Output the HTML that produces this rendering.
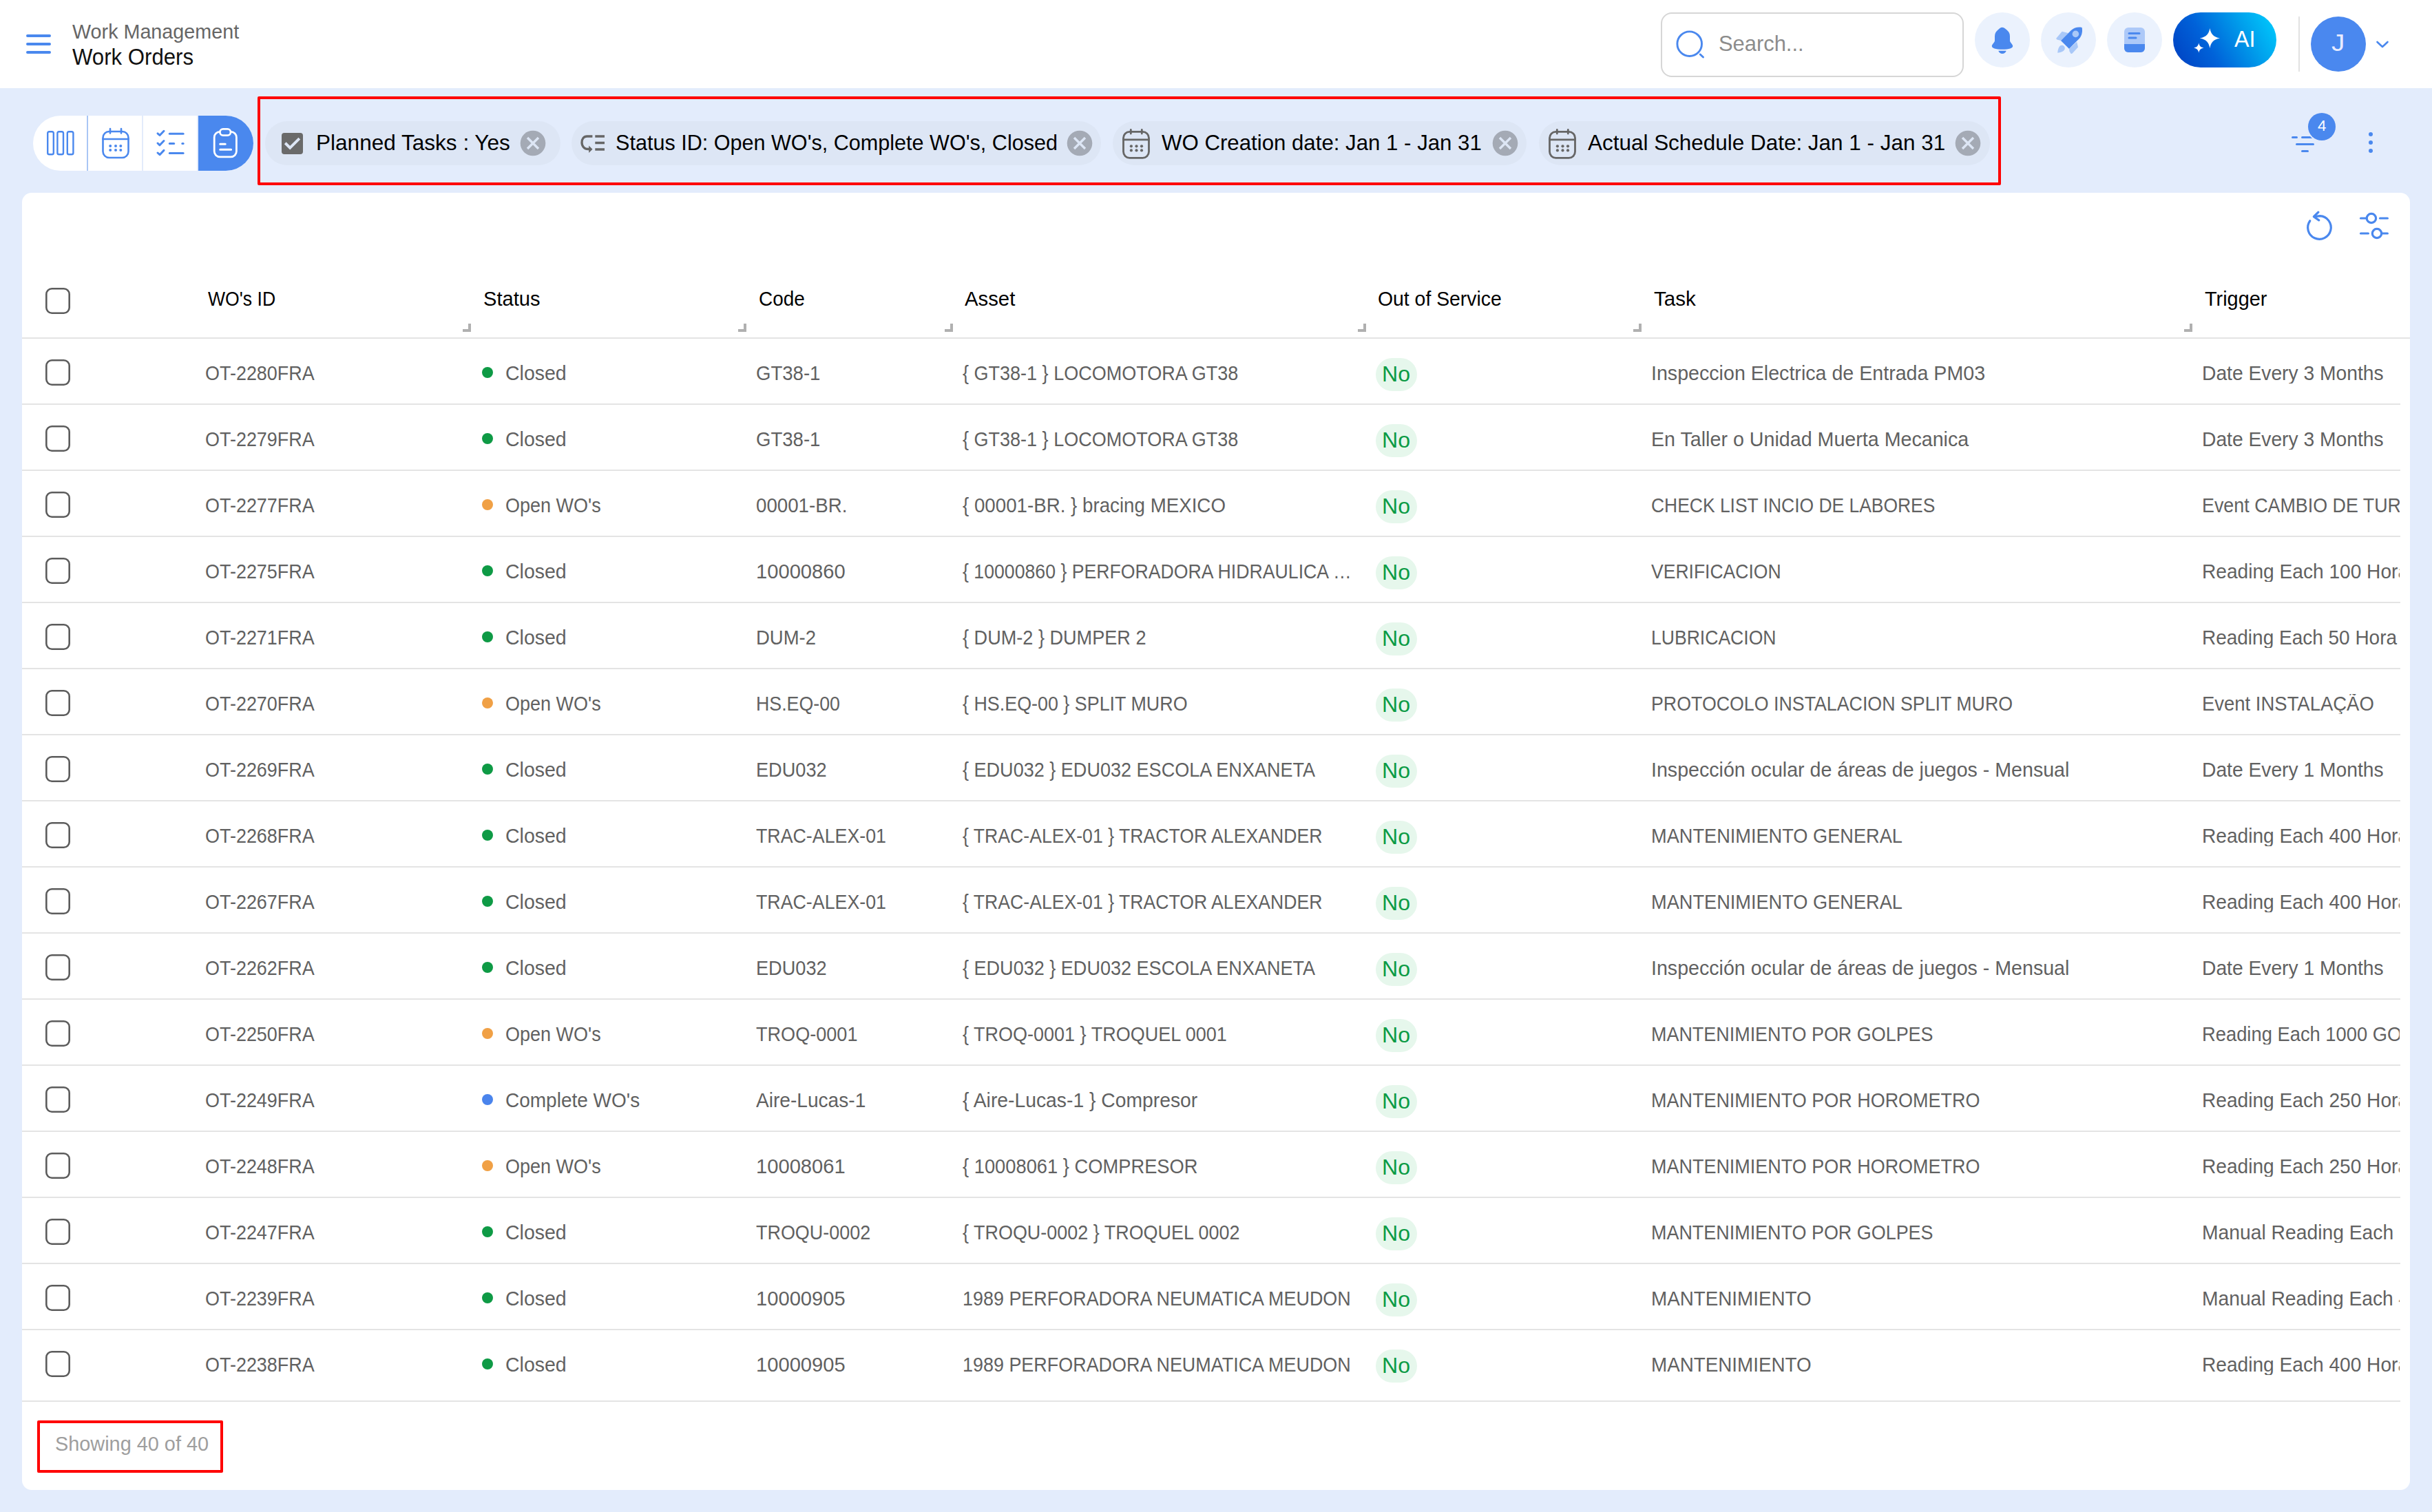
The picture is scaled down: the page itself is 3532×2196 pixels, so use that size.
<!DOCTYPE html>
<html><head><meta charset="utf-8"><title>Work Orders</title>
<style>
html,body{margin:0;padding:0}
body{width:3532px;height:2196px;position:relative;overflow:hidden;background:#e3ecfc;font-family:"Liberation Sans", sans-serif}
</style></head><body>
<div style="position:absolute;left:0;top:0;width:3532px;height:128px;background:#fff"></div>
<div style="position:absolute;left:38px;top:49.9px;width:36px;height:4.6px;border-radius:2.3px;background:#4a88ee"></div>
<div style="position:absolute;left:38px;top:61.9px;width:36px;height:4.6px;border-radius:2.3px;background:#4a88ee"></div>
<div style="position:absolute;left:38px;top:73.9px;width:36px;height:4.6px;border-radius:2.3px;background:#4a88ee"></div>
<div style="position:absolute;left:105px;top:31.5px;white-space:pre;font-size:29px;line-height:29px;color:#666666;font-weight:400"><span style="display:inline-block;transform:scaleX(0.9904);transform-origin:0 0;white-space:pre">Work Management</span></div>
<div style="position:absolute;left:105px;top:66.1px;white-space:pre;font-size:33px;line-height:33px;color:#111111;font-weight:400"><span style="display:inline-block;transform:scaleX(0.9446);transform-origin:0 0;white-space:pre">Work Orders</span></div>
<div style="position:absolute;left:2412px;top:18px;width:436px;height:90px;border:2px solid #d6d6d6;border-radius:16px;background:#fff"></div>
<svg style="position:absolute;left:2430px;top:40px" width="48" height="48" viewBox="0 0 48 48"><circle cx="23.7" cy="23.7" r="17.8" fill="none" stroke="#4a88ee" stroke-width="2.9"/><path d="M39.200 39 L43.500 43" stroke="#4a88ee" stroke-width="2.9" stroke-linecap="round"/></svg>
<div style="position:absolute;left:2496px;top:46.9px;white-space:pre;font-size:32px;line-height:32px;color:#8c8c8c;font-weight:400"><span style="display:inline-block;transform:scaleX(0.9652);transform-origin:0 0;white-space:pre">Search...</span></div>
<div style="position:absolute;left:2868px;top:18px;width:80px;height:80px;border-radius:40px;background:#ebf2fd"></div>
<div style="position:absolute;left:2964px;top:18px;width:80px;height:80px;border-radius:40px;background:#ebf2fd"></div>
<div style="position:absolute;left:3060px;top:18px;width:80px;height:80px;border-radius:40px;background:#ebf2fd"></div>
<svg style="position:absolute;left:2888px;top:38px" width="40" height="42" viewBox="0 0 40 42"><path d="M19.7 1.8C17.5 1.8 16 3.5 13.5 5.5C10.5 8 9 10.5 9 15V21C9 23.5 4.8 26.5 4.8 29C4.8 32 10 33.8 20 33.8S35.2 32 35.2 29C35.2 26.5 31 23.5 31 21V15C31 10.5 29.5 8 26.5 5.5C24 3.5 22 1.8 19.7 1.8Z" fill="#4a88ee"/><path d="M14.3 35.8H25.7C25 38.3 22.7 40 20 40S15 38.3 14.3 35.8Z" fill="#4a88ee"/></svg>
<svg style="position:absolute;left:2984px;top:38px" width="44" height="44" viewBox="0 0 44 44"><path d="M10.7 7.8 L19.7 9.9 L9 20.9 L4.2 19.7 C2.6 19.3 1.8 18.3 2.6 17.3 Z" fill="#a9c8f8"/><path d="M32.2 22.7 L34 30.4 L25.7 39.4 C24.8 40.3 23.9 40.3 23.3 39.5 L21.5 36.4 L20.9 32.8 Z" fill="#a9c8f8"/><path d="M4.2 38.8 C4.5 34.5 5.8 30.5 7.6 28.8 C9.4 27.1 12 27.4 13.6 29 C15.2 30.6 15.3 33.3 13.5 35.2 C11.8 37 8.6 38.4 4.2 38.8Z" fill="#a9c8f8"/><path d="M9 20.9 L23.9 6 C28.5 1.8 34 0.9 39.6 1.9 C40.7 7.3 39.7 13.4 35.8 17.9 L20.9 32.8 Z" fill="#4a88ee"/><circle cx="30.4" cy="11.4" r="4.8" fill="#a9c8f8"/></svg>
<svg style="position:absolute;left:3084px;top:39px" width="32" height="38" viewBox="0 0 32 38"><rect x="1" y="1" width="30" height="36" rx="6" fill="#adc9f8"/><path d="M1 25 H31 V31 a6 6 0 0 1 -6 6 H7 a6 6 0 0 1 -6 -6 Z" fill="#4a88ee"/><path d="M8 9.5 H23 M8 16 H18" stroke="#4a88ee" stroke-width="3" stroke-linecap="round"/></svg>
<div style="position:absolute;left:3156px;top:18px;width:150px;height:80px;border-radius:40px;background:linear-gradient(60deg,#003fc0 0%,#0062d9 35%,#00a0ec 70%,#00d0ff 100%)"></div>
<svg style="position:absolute;left:3180px;top:36px" width="50" height="46" viewBox="0 0 50 46"><path d="M29.4 5 C30.700 13 34.200 17.600 44 19.500 C34.200 21.400 30.700 26 29.400 34 C28.100 26 24.600 21.400 14.800 19.500 C24.600 17.600 28.100 13 29.400 5Z" fill="#fff"/><path d="M13.300 26.200 C14 30.300 15.700 32.500 20.500 33.500 C15.700 34.500 14 36.700 13.300 40.800 C12.600 36.700 10.900 34.500 6.100 33.500 C10.900 32.500 12.600 30.300 13.300 26.200Z" fill="#fff"/></svg>
<div style="position:absolute;left:3245px;top:40.1px;white-space:pre;font-size:33px;line-height:33px;color:#ffffff;font-weight:400"><span style="display:inline-block;transform:scaleX(0.9783);transform-origin:0 0;white-space:pre">AI</span></div>
<div style="position:absolute;left:3338px;top:24px;width:2px;height:80px;background:#e2e2e2"></div>
<div style="position:absolute;left:3356px;top:24px;width:80px;height:80px;border-radius:40px;background:#4a88ef"></div>
<div style="position:absolute;left:3386px;top:44.4px;white-space:pre;font-size:35px;line-height:35px;color:#e8ebff;font-weight:400"><span style="display:inline-block;transform:scaleX(1.1035);transform-origin:0 0;white-space:pre">J</span></div>
<svg style="position:absolute;left:3448px;top:56px" width="24" height="18" viewBox="0 0 24 18"><path d="M4.5 5 L12 12 L19.5 5" fill="none" stroke="#4a88ee" stroke-width="2.6" stroke-linecap="round" stroke-linejoin="round"/></svg>
<div style="position:absolute;left:48px;top:168px;width:320px;height:80px;border-radius:40px;background:#fff;overflow:hidden"><div style="position:absolute;left:78px;top:0;width:2px;height:80px;background:#a9c6f5"></div><div style="position:absolute;left:158px;top:0;width:2px;height:80px;background:#e3ebfb"></div><div style="position:absolute;left:238px;top:0;width:2px;height:80px;background:#e3ebfb"></div><div style="position:absolute;left:240px;top:0;width:80px;height:80px;background:#4a88ee"></div></div>
<svg style="position:absolute;left:64px;top:186px" width="48" height="44" viewBox="0 0 48 44"><rect x="5.200" y="5.200" width="8.600" height="33" rx="2.300" fill="none" stroke="#4a88ee" stroke-width="2.4"/><rect x="19.400" y="5.200" width="8.600" height="33" rx="2.300" fill="none" stroke="#4a88ee" stroke-width="2.4"/><rect x="33.800" y="5.200" width="8.600" height="33" rx="2.300" fill="none" stroke="#4a88ee" stroke-width="2.4"/></svg>
<svg style="position:absolute;left:144px;top:184px" width="48" height="50" viewBox="0 0 48 50"><rect x="5.500" y="7" width="37" height="38" rx="9" fill="none" stroke="#4a88ee" stroke-width="2.6"/><path d="M5.5 18 H42.5 M16 3 V9.500 M32 3 V9.500" stroke="#4a88ee" stroke-width="2.600" stroke-linecap="round"/><g fill="#4a88ee"><circle cx="16.200" cy="28" r="2"/><circle cx="24" cy="28" r="2"/><circle cx="31.300" cy="28" r="2"/><circle cx="16.200" cy="34" r="2"/><circle cx="24" cy="34" r="2"/><circle cx="31.300" cy="34" r="2"/></g></svg>
<svg style="position:absolute;left:224px;top:186px" width="48" height="44" viewBox="0 0 48 44"><g fill="none" stroke="#4a88ee" stroke-width="3" stroke-linecap="round" stroke-linejoin="round"><path d="M5 7.800 L8 10.500 L14 4.300"/><path d="M5 22 L8 24.800 L14 18.500"/><path d="M5 36 L8 38.700 L14 32.400"/><path d="M22.300 8.300 H42.100"/><path d="M22.300 22.600 H28.700"/><path d="M40.800 22.600 H42.100"/><path d="M22.300 36.500 H42.100"/></g></svg>
<svg style="position:absolute;left:304px;top:182px" width="48" height="52" viewBox="0 0 48 52"><rect x="7.200" y="9.400" width="32.200" height="36.400" rx="8" fill="none" stroke="#fff" stroke-width="2.8"/><rect x="15.400" y="5.300" width="15.600" height="9.300" rx="4.600" fill="#4a88ee" stroke="#fff" stroke-width="2.800"/><path d="M15.700 27.200 H23.200 M15.700 35.300 H31.600" stroke="#fff" stroke-width="3" stroke-linecap="round"/></svg>
<div style="position:absolute;left:374px;top:140px;width:2524px;height:121px;border:4px solid #ff0000;border-radius:2px"></div>
<div style="position:absolute;left:385px;top:176px;width:429px;height:64px;border-radius:32px;background:#dde6f5"></div>
<div style="position:absolute;left:830px;top:176px;width:769px;height:64px;border-radius:32px;background:#dde6f5"></div>
<div style="position:absolute;left:1616px;top:176px;width:601px;height:64px;border-radius:32px;background:#dde6f5"></div>
<div style="position:absolute;left:2235px;top:176px;width:655px;height:64px;border-radius:32px;background:#dde6f5"></div>
<svg style="position:absolute;left:409px;top:193px" width="31" height="31" viewBox="0 0 31 31"><rect x="0" y="0" width="31" height="31" rx="4" fill="#6a6a6a"/><path d="M5.200 14.800 L12.200 21.600 L25.800 8.200" fill="none" stroke="#dde6f5" stroke-width="4"/></svg>
<div style="position:absolute;left:459px;top:190.9px;white-space:pre;font-size:32px;line-height:32px;color:#000000;font-weight:400"><span style="display:inline-block;transform:scaleX(0.9860);transform-origin:0 0;white-space:pre">Planned Tasks : Yes</span></div>
<svg style="position:absolute;left:840px;top:192px" width="40" height="36" viewBox="0 0 40 36"><path d="M20.400 6 H12.500 C7.800 6 5 9.800 5 15 C5 20.500 8.800 24.500 14 24.500 H16" fill="none" stroke="#666" stroke-width="3.300"/><path d="M15.200 19.500 L20.500 24.700 L15.200 30 Z" fill="#666"/><path d="M24.300 6 H38 M24.300 15.500 H38 M24.300 25 H38" stroke="#666" stroke-width="3.300"/></svg>
<div style="position:absolute;left:894px;top:190.9px;white-space:pre;font-size:32px;line-height:32px;color:#000000;font-weight:400"><span style="display:inline-block;transform:scaleX(0.9554);transform-origin:0 0;white-space:pre">Status ID: Open WO&#x27;s, Complete WO&#x27;s, Closed</span></div>
<svg style="position:absolute;left:1626px;top:183.5px" width="48" height="50" viewBox="0 0 48 50"><rect x="5.500" y="7.300" width="37" height="38" rx="9" fill="none" stroke="#666" stroke-width="2.8"/><path d="M5.5 18.800 H42.5 M16.300 4.500 V10 M32.300 4.500 V10" stroke="#666" stroke-width="2.8" stroke-linecap="round"/><g fill="#666"><circle cx="16.900" cy="28.300" r="2.100"/><circle cx="24.500" cy="28.300" r="2.100"/><circle cx="32" cy="28.300" r="2.100"/><circle cx="16.900" cy="34.400" r="2.100"/><circle cx="24.500" cy="34.400" r="2.100"/><circle cx="32" cy="34.400" r="2.100"/></g></svg>
<div style="position:absolute;left:1687px;top:190.9px;white-space:pre;font-size:32px;line-height:32px;color:#000000;font-weight:400"><span style="display:inline-block;transform:scaleX(0.9751);transform-origin:0 0;white-space:pre">WO Creation date: Jan 1 - Jan 31</span></div>
<svg style="position:absolute;left:2245px;top:183.5px" width="48" height="50" viewBox="0 0 48 50"><rect x="5.500" y="7.300" width="37" height="38" rx="9" fill="none" stroke="#666" stroke-width="2.8"/><path d="M5.5 18.800 H42.5 M16.300 4.500 V10 M32.300 4.500 V10" stroke="#666" stroke-width="2.8" stroke-linecap="round"/><g fill="#666"><circle cx="16.900" cy="28.300" r="2.100"/><circle cx="24.500" cy="28.300" r="2.100"/><circle cx="32" cy="28.300" r="2.100"/><circle cx="16.900" cy="34.400" r="2.100"/><circle cx="24.500" cy="34.400" r="2.100"/><circle cx="32" cy="34.400" r="2.100"/></g></svg>
<div style="position:absolute;left:2306px;top:190.9px;white-space:pre;font-size:32px;line-height:32px;color:#000000;font-weight:400"><span style="display:inline-block;transform:scaleX(0.9826);transform-origin:0 0;white-space:pre">Actual Schedule Date: Jan 1 - Jan 31</span></div>
<svg style="position:absolute;left:755px;top:189px" width="38" height="38" viewBox="0 0 38 38"><circle cx="19" cy="19" r="18.300" fill="#a4aab5"/><path d="M11 11 L27 27 M27 11 L11 27" stroke="#dde6f5" stroke-width="3.4"/></svg>
<svg style="position:absolute;left:1549px;top:189px" width="38" height="38" viewBox="0 0 38 38"><circle cx="19" cy="19" r="18.300" fill="#a4aab5"/><path d="M11 11 L27 27 M27 11 L11 27" stroke="#dde6f5" stroke-width="3.4"/></svg>
<svg style="position:absolute;left:2167px;top:189px" width="38" height="38" viewBox="0 0 38 38"><circle cx="19" cy="19" r="18.300" fill="#a4aab5"/><path d="M11 11 L27 27 M27 11 L11 27" stroke="#dde6f5" stroke-width="3.4"/></svg>
<svg style="position:absolute;left:2839px;top:189px" width="38" height="38" viewBox="0 0 38 38"><circle cx="19" cy="19" r="18.300" fill="#a4aab5"/><path d="M11 11 L27 27 M27 11 L11 27" stroke="#dde6f5" stroke-width="3.4"/></svg>
<svg style="position:absolute;left:3320px;top:160px" width="80" height="70" viewBox="0 0 80 70"><g stroke="#4a88ee" stroke-width="3" stroke-linecap="round"><path d="M9.500 39.400 H15.500"/><path d="M23.500 39.400 H42"/><path d="M15.500 49.400 H39.500"/><path d="M23.500 59.400 H31.500"/></g><circle cx="52" cy="24" r="22" fill="#e3ebfb"/><circle cx="52" cy="24" r="20" fill="#4a88ee"/></svg>
<div style="position:absolute;left:3366px;top:171.9px;white-space:pre;font-size:22px;line-height:22px;color:#ffffff;font-weight:400"><span style="display:inline-block;transform:scaleX(1.0105);transform-origin:0 0;white-space:pre">4</span></div>
<div style="position:absolute;left:3440px;top:192px;width:6px;height:6px;border-radius:3px;background:#4a88ee"></div>
<div style="position:absolute;left:3440px;top:204px;width:6px;height:6px;border-radius:3px;background:#4a88ee"></div>
<div style="position:absolute;left:3440px;top:216px;width:6px;height:6px;border-radius:3px;background:#4a88ee"></div>
<div style="position:absolute;left:32px;top:280px;width:3468px;height:1884px;border-radius:14px;background:#fff"></div>
<svg style="position:absolute;left:3344.7px;top:302px" width="48" height="52" viewBox="0 0 48 52"><path d="M9.800 18.700 A16.800 16.800 0 1 0 24.200 11.700 L16.500 12.600" fill="none" stroke="#4a88ee" stroke-width="3.200" stroke-linecap="round"/><path d="M21.900 6.100 L15.300 12.700 L22.800 17.900" fill="none" stroke="#4a88ee" stroke-width="3.200" stroke-linecap="round" stroke-linejoin="round"/></svg>
<svg style="position:absolute;left:3420px;top:304px" width="56" height="48" viewBox="0 0 56 48"><g fill="none" stroke="#4a88ee" stroke-width="3.200" stroke-linecap="round"><path d="M8.500 13 H17"/><path d="M36.500 13 H47.400"/><circle cx="23.900" cy="13" r="6.700"/><path d="M8.500 35 H19.400"/><path d="M39 35 H47.400"/><circle cx="32" cy="35" r="6.700"/></g></svg>
<svg style="position:absolute;left:66px;top:418px" width="36" height="38" viewBox="0 0 36 38"><rect x="1.3" y="1.3" width="33.4" height="35.4" rx="8" fill="none" stroke="#5c5c5c" stroke-width="2.6"/></svg>
<div style="position:absolute;left:302px;top:419.5px;white-space:pre;font-size:29px;line-height:29px;color:#000000;font-weight:400"><span style="display:inline-block;transform:scaleX(0.9171);transform-origin:0 0;white-space:pre">WO&#x27;s ID</span></div>
<div style="position:absolute;left:702px;top:419.5px;white-space:pre;font-size:29px;line-height:29px;color:#000000;font-weight:400"><span style="display:inline-block;transform:scaleX(1.0031);transform-origin:0 0;white-space:pre">Status</span></div>
<div style="position:absolute;left:1102px;top:419.5px;white-space:pre;font-size:29px;line-height:29px;color:#000000;font-weight:400"><span style="display:inline-block;transform:scaleX(0.9632);transform-origin:0 0;white-space:pre">Code</span></div>
<div style="position:absolute;left:1401px;top:419.5px;white-space:pre;font-size:29px;line-height:29px;color:#000000;font-weight:400"><span style="display:inline-block;transform:scaleX(1.0108);transform-origin:0 0;white-space:pre">Asset</span></div>
<div style="position:absolute;left:2001px;top:419.5px;white-space:pre;font-size:29px;line-height:29px;color:#000000;font-weight:400"><span style="display:inline-block;transform:scaleX(0.9784);transform-origin:0 0;white-space:pre">Out of Service</span></div>
<div style="position:absolute;left:2402px;top:419.5px;white-space:pre;font-size:29px;line-height:29px;color:#000000;font-weight:400"><span style="display:inline-block;transform:scaleX(1.0198);transform-origin:0 0;white-space:pre">Task</span></div>
<div style="position:absolute;left:3202px;top:419.5px;white-space:pre;font-size:29px;line-height:29px;color:#000000;font-weight:400"><span style="display:inline-block;transform:scaleX(0.9957);transform-origin:0 0;white-space:pre">Trigger</span></div>
<div style="position:absolute;left:672px;top:470px;width:8px;height:8px;border-right:4px solid #b0b0b0;border-bottom:4px solid #b0b0b0"></div>
<div style="position:absolute;left:1072px;top:470px;width:8px;height:8px;border-right:4px solid #b0b0b0;border-bottom:4px solid #b0b0b0"></div>
<div style="position:absolute;left:1372px;top:470px;width:8px;height:8px;border-right:4px solid #b0b0b0;border-bottom:4px solid #b0b0b0"></div>
<div style="position:absolute;left:1972px;top:470px;width:8px;height:8px;border-right:4px solid #b0b0b0;border-bottom:4px solid #b0b0b0"></div>
<div style="position:absolute;left:2372px;top:470px;width:8px;height:8px;border-right:4px solid #b0b0b0;border-bottom:4px solid #b0b0b0"></div>
<div style="position:absolute;left:3172px;top:470px;width:8px;height:8px;border-right:4px solid #b0b0b0;border-bottom:4px solid #b0b0b0"></div>
<div style="position:absolute;left:32px;top:490px;width:3468px;height:2px;background:#e4e4e4"></div>
<svg style="position:absolute;left:66px;top:522px" width="36" height="38" viewBox="0 0 36 38"><rect x="1.3" y="1.3" width="33.4" height="35.4" rx="8" fill="none" stroke="#5c5c5c" stroke-width="2.6"/></svg>
<div style="position:absolute;left:298px;top:527.5px;white-space:pre;font-size:29px;line-height:29px;color:#616161;font-weight:400"><span style="display:inline-block;transform:scaleX(0.9291);transform-origin:0 0;white-space:pre">OT-2280FRA</span></div>
<div style="position:absolute;left:700px;top:533px;width:16px;height:16px;border-radius:8px;background:#0e9a45"></div>
<div style="position:absolute;left:734px;top:527.5px;white-space:pre;font-size:29px;line-height:29px;color:#616161;font-weight:400"><span style="display:inline-block;transform:scaleX(0.9823);transform-origin:0 0;white-space:pre">Closed</span></div>
<div style="position:absolute;left:1098px;top:527.5px;white-space:pre;font-size:29px;line-height:29px;color:#616161;font-weight:400"><span style="display:inline-block;transform:scaleX(0.9505);transform-origin:0 0;white-space:pre">GT38-1</span></div>
<div style="position:absolute;left:1398px;top:527.5px;white-space:pre;font-size:29px;line-height:29px;color:#616161;font-weight:400"><span style="display:inline-block;transform:scaleX(0.9315);transform-origin:0 0;white-space:pre">{ GT38-1 } LOCOMOTORA GT38</span></div>
<div style="position:absolute;left:1998px;top:520px;width:60px;height:48px;border-radius:24px;background:#e6f7ec"></div>
<div style="position:absolute;left:2007px;top:526.9px;white-space:pre;font-size:32px;line-height:32px;color:#0c9b45;font-weight:400"><span style="display:inline-block;transform:scaleX(1.0042);transform-origin:0 0;white-space:pre">No</span></div>
<div style="position:absolute;left:2398px;top:527.5px;white-space:pre;font-size:29px;line-height:29px;color:#616161;font-weight:400"><span style="display:inline-block;transform:scaleX(0.9867);transform-origin:0 0;white-space:pre">Inspeccion Electrica de Entrada PM03</span></div>
<div style="position:absolute;left:3198px;top:527.5px;width:287px;overflow:hidden;font-size:29px;line-height:29px;color:#616161;font-weight:400"><span style="display:inline-block;transform:scaleX(0.9733);transform-origin:0 0;white-space:pre">Date Every 3 Months</span></div>
<div style="position:absolute;left:32px;top:586px;width:3454px;height:2px;background:#e4e4e4"></div>
<svg style="position:absolute;left:66px;top:618px" width="36" height="38" viewBox="0 0 36 38"><rect x="1.3" y="1.3" width="33.4" height="35.4" rx="8" fill="none" stroke="#5c5c5c" stroke-width="2.6"/></svg>
<div style="position:absolute;left:298px;top:623.5px;white-space:pre;font-size:29px;line-height:29px;color:#616161;font-weight:400"><span style="display:inline-block;transform:scaleX(0.9291);transform-origin:0 0;white-space:pre">OT-2279FRA</span></div>
<div style="position:absolute;left:700px;top:629px;width:16px;height:16px;border-radius:8px;background:#0e9a45"></div>
<div style="position:absolute;left:734px;top:623.5px;white-space:pre;font-size:29px;line-height:29px;color:#616161;font-weight:400"><span style="display:inline-block;transform:scaleX(0.9823);transform-origin:0 0;white-space:pre">Closed</span></div>
<div style="position:absolute;left:1098px;top:623.5px;white-space:pre;font-size:29px;line-height:29px;color:#616161;font-weight:400"><span style="display:inline-block;transform:scaleX(0.9505);transform-origin:0 0;white-space:pre">GT38-1</span></div>
<div style="position:absolute;left:1398px;top:623.5px;white-space:pre;font-size:29px;line-height:29px;color:#616161;font-weight:400"><span style="display:inline-block;transform:scaleX(0.9315);transform-origin:0 0;white-space:pre">{ GT38-1 } LOCOMOTORA GT38</span></div>
<div style="position:absolute;left:1998px;top:616px;width:60px;height:48px;border-radius:24px;background:#e6f7ec"></div>
<div style="position:absolute;left:2007px;top:622.9px;white-space:pre;font-size:32px;line-height:32px;color:#0c9b45;font-weight:400"><span style="display:inline-block;transform:scaleX(1.0042);transform-origin:0 0;white-space:pre">No</span></div>
<div style="position:absolute;left:2398px;top:623.5px;white-space:pre;font-size:29px;line-height:29px;color:#616161;font-weight:400"><span style="display:inline-block;transform:scaleX(0.9878);transform-origin:0 0;white-space:pre">En Taller o Unidad Muerta Mecanica</span></div>
<div style="position:absolute;left:3198px;top:623.5px;width:287px;overflow:hidden;font-size:29px;line-height:29px;color:#616161;font-weight:400"><span style="display:inline-block;transform:scaleX(0.9733);transform-origin:0 0;white-space:pre">Date Every 3 Months</span></div>
<div style="position:absolute;left:32px;top:682px;width:3454px;height:2px;background:#e4e4e4"></div>
<svg style="position:absolute;left:66px;top:714px" width="36" height="38" viewBox="0 0 36 38"><rect x="1.3" y="1.3" width="33.4" height="35.4" rx="8" fill="none" stroke="#5c5c5c" stroke-width="2.6"/></svg>
<div style="position:absolute;left:298px;top:719.5px;white-space:pre;font-size:29px;line-height:29px;color:#616161;font-weight:400"><span style="display:inline-block;transform:scaleX(0.9291);transform-origin:0 0;white-space:pre">OT-2277FRA</span></div>
<div style="position:absolute;left:700px;top:725px;width:16px;height:16px;border-radius:8px;background:#f0a045"></div>
<div style="position:absolute;left:734px;top:719.5px;white-space:pre;font-size:29px;line-height:29px;color:#616161;font-weight:400"><span style="display:inline-block;transform:scaleX(0.9307);transform-origin:0 0;white-space:pre">Open WO&#x27;s</span></div>
<div style="position:absolute;left:1098px;top:719.5px;white-space:pre;font-size:29px;line-height:29px;color:#616161;font-weight:400"><span style="display:inline-block;transform:scaleX(0.9547);transform-origin:0 0;white-space:pre">00001-BR.</span></div>
<div style="position:absolute;left:1398px;top:719.5px;white-space:pre;font-size:29px;line-height:29px;color:#616161;font-weight:400"><span style="display:inline-block;transform:scaleX(0.9554);transform-origin:0 0;white-space:pre">{ 00001-BR. } bracing MEXICO</span></div>
<div style="position:absolute;left:1998px;top:712px;width:60px;height:48px;border-radius:24px;background:#e6f7ec"></div>
<div style="position:absolute;left:2007px;top:718.9px;white-space:pre;font-size:32px;line-height:32px;color:#0c9b45;font-weight:400"><span style="display:inline-block;transform:scaleX(1.0042);transform-origin:0 0;white-space:pre">No</span></div>
<div style="position:absolute;left:2398px;top:719.5px;white-space:pre;font-size:29px;line-height:29px;color:#616161;font-weight:400"><span style="display:inline-block;transform:scaleX(0.9117);transform-origin:0 0;white-space:pre">CHECK LIST INCIO DE LABORES</span></div>
<div style="position:absolute;left:3198px;top:719.5px;width:287px;overflow:hidden;font-size:29px;line-height:29px;color:#616161;font-weight:400"><span style="display:inline-block;transform:scaleX(0.9260);transform-origin:0 0;white-space:pre">Event CAMBIO DE TURNO</span></div>
<div style="position:absolute;left:32px;top:778px;width:3454px;height:2px;background:#e4e4e4"></div>
<svg style="position:absolute;left:66px;top:810px" width="36" height="38" viewBox="0 0 36 38"><rect x="1.3" y="1.3" width="33.4" height="35.4" rx="8" fill="none" stroke="#5c5c5c" stroke-width="2.6"/></svg>
<div style="position:absolute;left:298px;top:815.5px;white-space:pre;font-size:29px;line-height:29px;color:#616161;font-weight:400"><span style="display:inline-block;transform:scaleX(0.9291);transform-origin:0 0;white-space:pre">OT-2275FRA</span></div>
<div style="position:absolute;left:700px;top:821px;width:16px;height:16px;border-radius:8px;background:#0e9a45"></div>
<div style="position:absolute;left:734px;top:815.5px;white-space:pre;font-size:29px;line-height:29px;color:#616161;font-weight:400"><span style="display:inline-block;transform:scaleX(0.9823);transform-origin:0 0;white-space:pre">Closed</span></div>
<div style="position:absolute;left:1098px;top:815.5px;white-space:pre;font-size:29px;line-height:29px;color:#616161;font-weight:400"><span style="display:inline-block;transform:scaleX(1.0050);transform-origin:0 0;white-space:pre">10000860</span></div>
<div style="position:absolute;left:1398px;top:815.5px;white-space:pre;font-size:29px;line-height:29px;color:#616161;font-weight:400"><span style="display:inline-block;transform:scaleX(0.9196);transform-origin:0 0;white-space:pre">{ 10000860 } PERFORADORA HIDRAULICA …</span></div>
<div style="position:absolute;left:1998px;top:808px;width:60px;height:48px;border-radius:24px;background:#e6f7ec"></div>
<div style="position:absolute;left:2007px;top:814.9px;white-space:pre;font-size:32px;line-height:32px;color:#0c9b45;font-weight:400"><span style="display:inline-block;transform:scaleX(1.0042);transform-origin:0 0;white-space:pre">No</span></div>
<div style="position:absolute;left:2398px;top:815.5px;white-space:pre;font-size:29px;line-height:29px;color:#616161;font-weight:400"><span style="display:inline-block;transform:scaleX(0.9145);transform-origin:0 0;white-space:pre">VERIFICACION</span></div>
<div style="position:absolute;left:3198px;top:815.5px;width:287px;overflow:hidden;font-size:29px;line-height:29px;color:#616161;font-weight:400"><span style="display:inline-block;transform:scaleX(0.9693);transform-origin:0 0;white-space:pre">Reading Each 100 Horas</span></div>
<div style="position:absolute;left:32px;top:874px;width:3454px;height:2px;background:#e4e4e4"></div>
<svg style="position:absolute;left:66px;top:906px" width="36" height="38" viewBox="0 0 36 38"><rect x="1.3" y="1.3" width="33.4" height="35.4" rx="8" fill="none" stroke="#5c5c5c" stroke-width="2.6"/></svg>
<div style="position:absolute;left:298px;top:911.5px;white-space:pre;font-size:29px;line-height:29px;color:#616161;font-weight:400"><span style="display:inline-block;transform:scaleX(0.9291);transform-origin:0 0;white-space:pre">OT-2271FRA</span></div>
<div style="position:absolute;left:700px;top:917px;width:16px;height:16px;border-radius:8px;background:#0e9a45"></div>
<div style="position:absolute;left:734px;top:911.5px;white-space:pre;font-size:29px;line-height:29px;color:#616161;font-weight:400"><span style="display:inline-block;transform:scaleX(0.9823);transform-origin:0 0;white-space:pre">Closed</span></div>
<div style="position:absolute;left:1098px;top:911.5px;white-space:pre;font-size:29px;line-height:29px;color:#616161;font-weight:400"><span style="display:inline-block;transform:scaleX(0.9473);transform-origin:0 0;white-space:pre">DUM-2</span></div>
<div style="position:absolute;left:1398px;top:911.5px;white-space:pre;font-size:29px;line-height:29px;color:#616161;font-weight:400"><span style="display:inline-block;transform:scaleX(0.9343);transform-origin:0 0;white-space:pre">{ DUM-2 } DUMPER 2</span></div>
<div style="position:absolute;left:1998px;top:904px;width:60px;height:48px;border-radius:24px;background:#e6f7ec"></div>
<div style="position:absolute;left:2007px;top:910.9px;white-space:pre;font-size:32px;line-height:32px;color:#0c9b45;font-weight:400"><span style="display:inline-block;transform:scaleX(1.0042);transform-origin:0 0;white-space:pre">No</span></div>
<div style="position:absolute;left:2398px;top:911.5px;white-space:pre;font-size:29px;line-height:29px;color:#616161;font-weight:400"><span style="display:inline-block;transform:scaleX(0.9158);transform-origin:0 0;white-space:pre">LUBRICACION</span></div>
<div style="position:absolute;left:3198px;top:911.5px;width:287px;overflow:hidden;font-size:29px;line-height:29px;color:#616161;font-weight:400"><span style="display:inline-block;transform:scaleX(0.9646);transform-origin:0 0;white-space:pre">Reading Each 50 Hora</span></div>
<div style="position:absolute;left:32px;top:970px;width:3454px;height:2px;background:#e4e4e4"></div>
<svg style="position:absolute;left:66px;top:1002px" width="36" height="38" viewBox="0 0 36 38"><rect x="1.3" y="1.3" width="33.4" height="35.4" rx="8" fill="none" stroke="#5c5c5c" stroke-width="2.6"/></svg>
<div style="position:absolute;left:298px;top:1007.5px;white-space:pre;font-size:29px;line-height:29px;color:#616161;font-weight:400"><span style="display:inline-block;transform:scaleX(0.9291);transform-origin:0 0;white-space:pre">OT-2270FRA</span></div>
<div style="position:absolute;left:700px;top:1013px;width:16px;height:16px;border-radius:8px;background:#f0a045"></div>
<div style="position:absolute;left:734px;top:1007.5px;white-space:pre;font-size:29px;line-height:29px;color:#616161;font-weight:400"><span style="display:inline-block;transform:scaleX(0.9307);transform-origin:0 0;white-space:pre">Open WO&#x27;s</span></div>
<div style="position:absolute;left:1098px;top:1007.5px;white-space:pre;font-size:29px;line-height:29px;color:#616161;font-weight:400"><span style="display:inline-block;transform:scaleX(0.9226);transform-origin:0 0;white-space:pre">HS.EQ-00</span></div>
<div style="position:absolute;left:1398px;top:1007.5px;white-space:pre;font-size:29px;line-height:29px;color:#616161;font-weight:400"><span style="display:inline-block;transform:scaleX(0.9266);transform-origin:0 0;white-space:pre">{ HS.EQ-00 } SPLIT MURO</span></div>
<div style="position:absolute;left:1998px;top:1000px;width:60px;height:48px;border-radius:24px;background:#e6f7ec"></div>
<div style="position:absolute;left:2007px;top:1006.9px;white-space:pre;font-size:32px;line-height:32px;color:#0c9b45;font-weight:400"><span style="display:inline-block;transform:scaleX(1.0042);transform-origin:0 0;white-space:pre">No</span></div>
<div style="position:absolute;left:2398px;top:1007.5px;white-space:pre;font-size:29px;line-height:29px;color:#616161;font-weight:400"><span style="display:inline-block;transform:scaleX(0.9231);transform-origin:0 0;white-space:pre">PROTOCOLO INSTALACION SPLIT MURO</span></div>
<div style="position:absolute;left:3198px;top:1007.5px;width:287px;overflow:hidden;font-size:29px;line-height:29px;color:#616161;font-weight:400"><span style="display:inline-block;transform:scaleX(0.9470);transform-origin:0 0;white-space:pre">Event INSTALAÇÃO</span></div>
<div style="position:absolute;left:32px;top:1066px;width:3454px;height:2px;background:#e4e4e4"></div>
<svg style="position:absolute;left:66px;top:1098px" width="36" height="38" viewBox="0 0 36 38"><rect x="1.3" y="1.3" width="33.4" height="35.4" rx="8" fill="none" stroke="#5c5c5c" stroke-width="2.6"/></svg>
<div style="position:absolute;left:298px;top:1103.5px;white-space:pre;font-size:29px;line-height:29px;color:#616161;font-weight:400"><span style="display:inline-block;transform:scaleX(0.9291);transform-origin:0 0;white-space:pre">OT-2269FRA</span></div>
<div style="position:absolute;left:700px;top:1109px;width:16px;height:16px;border-radius:8px;background:#0e9a45"></div>
<div style="position:absolute;left:734px;top:1103.5px;white-space:pre;font-size:29px;line-height:29px;color:#616161;font-weight:400"><span style="display:inline-block;transform:scaleX(0.9823);transform-origin:0 0;white-space:pre">Closed</span></div>
<div style="position:absolute;left:1098px;top:1103.5px;white-space:pre;font-size:29px;line-height:29px;color:#616161;font-weight:400"><span style="display:inline-block;transform:scaleX(0.9364);transform-origin:0 0;white-space:pre">EDU032</span></div>
<div style="position:absolute;left:1398px;top:1103.5px;white-space:pre;font-size:29px;line-height:29px;color:#616161;font-weight:400"><span style="display:inline-block;transform:scaleX(0.9326);transform-origin:0 0;white-space:pre">{ EDU032 } EDU032 ESCOLA ENXANETA</span></div>
<div style="position:absolute;left:1998px;top:1096px;width:60px;height:48px;border-radius:24px;background:#e6f7ec"></div>
<div style="position:absolute;left:2007px;top:1102.9px;white-space:pre;font-size:32px;line-height:32px;color:#0c9b45;font-weight:400"><span style="display:inline-block;transform:scaleX(1.0042);transform-origin:0 0;white-space:pre">No</span></div>
<div style="position:absolute;left:2398px;top:1103.5px;white-space:pre;font-size:29px;line-height:29px;color:#616161;font-weight:400"><span style="display:inline-block;transform:scaleX(0.9863);transform-origin:0 0;white-space:pre">Inspección ocular de áreas de juegos - Mensual</span></div>
<div style="position:absolute;left:3198px;top:1103.5px;width:287px;overflow:hidden;font-size:29px;line-height:29px;color:#616161;font-weight:400"><span style="display:inline-block;transform:scaleX(0.9733);transform-origin:0 0;white-space:pre">Date Every 1 Months</span></div>
<div style="position:absolute;left:32px;top:1162px;width:3454px;height:2px;background:#e4e4e4"></div>
<svg style="position:absolute;left:66px;top:1194px" width="36" height="38" viewBox="0 0 36 38"><rect x="1.3" y="1.3" width="33.4" height="35.4" rx="8" fill="none" stroke="#5c5c5c" stroke-width="2.6"/></svg>
<div style="position:absolute;left:298px;top:1199.5px;white-space:pre;font-size:29px;line-height:29px;color:#616161;font-weight:400"><span style="display:inline-block;transform:scaleX(0.9291);transform-origin:0 0;white-space:pre">OT-2268FRA</span></div>
<div style="position:absolute;left:700px;top:1205px;width:16px;height:16px;border-radius:8px;background:#0e9a45"></div>
<div style="position:absolute;left:734px;top:1199.5px;white-space:pre;font-size:29px;line-height:29px;color:#616161;font-weight:400"><span style="display:inline-block;transform:scaleX(0.9823);transform-origin:0 0;white-space:pre">Closed</span></div>
<div style="position:absolute;left:1098px;top:1199.5px;white-space:pre;font-size:29px;line-height:29px;color:#616161;font-weight:400"><span style="display:inline-block;transform:scaleX(0.9231);transform-origin:0 0;white-space:pre">TRAC-ALEX-01</span></div>
<div style="position:absolute;left:1398px;top:1199.5px;white-space:pre;font-size:29px;line-height:29px;color:#616161;font-weight:400"><span style="display:inline-block;transform:scaleX(0.9182);transform-origin:0 0;white-space:pre">{ TRAC-ALEX-01 } TRACTOR ALEXANDER</span></div>
<div style="position:absolute;left:1998px;top:1192px;width:60px;height:48px;border-radius:24px;background:#e6f7ec"></div>
<div style="position:absolute;left:2007px;top:1198.9px;white-space:pre;font-size:32px;line-height:32px;color:#0c9b45;font-weight:400"><span style="display:inline-block;transform:scaleX(1.0042);transform-origin:0 0;white-space:pre">No</span></div>
<div style="position:absolute;left:2398px;top:1199.5px;white-space:pre;font-size:29px;line-height:29px;color:#616161;font-weight:400"><span style="display:inline-block;transform:scaleX(0.9372);transform-origin:0 0;white-space:pre">MANTENIMIENTO GENERAL</span></div>
<div style="position:absolute;left:3198px;top:1199.5px;width:287px;overflow:hidden;font-size:29px;line-height:29px;color:#616161;font-weight:400"><span style="display:inline-block;transform:scaleX(0.9693);transform-origin:0 0;white-space:pre">Reading Each 400 Horas</span></div>
<div style="position:absolute;left:32px;top:1258px;width:3454px;height:2px;background:#e4e4e4"></div>
<svg style="position:absolute;left:66px;top:1290px" width="36" height="38" viewBox="0 0 36 38"><rect x="1.3" y="1.3" width="33.4" height="35.4" rx="8" fill="none" stroke="#5c5c5c" stroke-width="2.6"/></svg>
<div style="position:absolute;left:298px;top:1295.5px;white-space:pre;font-size:29px;line-height:29px;color:#616161;font-weight:400"><span style="display:inline-block;transform:scaleX(0.9291);transform-origin:0 0;white-space:pre">OT-2267FRA</span></div>
<div style="position:absolute;left:700px;top:1301px;width:16px;height:16px;border-radius:8px;background:#0e9a45"></div>
<div style="position:absolute;left:734px;top:1295.5px;white-space:pre;font-size:29px;line-height:29px;color:#616161;font-weight:400"><span style="display:inline-block;transform:scaleX(0.9823);transform-origin:0 0;white-space:pre">Closed</span></div>
<div style="position:absolute;left:1098px;top:1295.5px;white-space:pre;font-size:29px;line-height:29px;color:#616161;font-weight:400"><span style="display:inline-block;transform:scaleX(0.9231);transform-origin:0 0;white-space:pre">TRAC-ALEX-01</span></div>
<div style="position:absolute;left:1398px;top:1295.5px;white-space:pre;font-size:29px;line-height:29px;color:#616161;font-weight:400"><span style="display:inline-block;transform:scaleX(0.9182);transform-origin:0 0;white-space:pre">{ TRAC-ALEX-01 } TRACTOR ALEXANDER</span></div>
<div style="position:absolute;left:1998px;top:1288px;width:60px;height:48px;border-radius:24px;background:#e6f7ec"></div>
<div style="position:absolute;left:2007px;top:1294.9px;white-space:pre;font-size:32px;line-height:32px;color:#0c9b45;font-weight:400"><span style="display:inline-block;transform:scaleX(1.0042);transform-origin:0 0;white-space:pre">No</span></div>
<div style="position:absolute;left:2398px;top:1295.5px;white-space:pre;font-size:29px;line-height:29px;color:#616161;font-weight:400"><span style="display:inline-block;transform:scaleX(0.9372);transform-origin:0 0;white-space:pre">MANTENIMIENTO GENERAL</span></div>
<div style="position:absolute;left:3198px;top:1295.5px;width:287px;overflow:hidden;font-size:29px;line-height:29px;color:#616161;font-weight:400"><span style="display:inline-block;transform:scaleX(0.9693);transform-origin:0 0;white-space:pre">Reading Each 400 Horas</span></div>
<div style="position:absolute;left:32px;top:1354px;width:3454px;height:2px;background:#e4e4e4"></div>
<svg style="position:absolute;left:66px;top:1386px" width="36" height="38" viewBox="0 0 36 38"><rect x="1.3" y="1.3" width="33.4" height="35.4" rx="8" fill="none" stroke="#5c5c5c" stroke-width="2.6"/></svg>
<div style="position:absolute;left:298px;top:1391.5px;white-space:pre;font-size:29px;line-height:29px;color:#616161;font-weight:400"><span style="display:inline-block;transform:scaleX(0.9291);transform-origin:0 0;white-space:pre">OT-2262FRA</span></div>
<div style="position:absolute;left:700px;top:1397px;width:16px;height:16px;border-radius:8px;background:#0e9a45"></div>
<div style="position:absolute;left:734px;top:1391.5px;white-space:pre;font-size:29px;line-height:29px;color:#616161;font-weight:400"><span style="display:inline-block;transform:scaleX(0.9823);transform-origin:0 0;white-space:pre">Closed</span></div>
<div style="position:absolute;left:1098px;top:1391.5px;white-space:pre;font-size:29px;line-height:29px;color:#616161;font-weight:400"><span style="display:inline-block;transform:scaleX(0.9364);transform-origin:0 0;white-space:pre">EDU032</span></div>
<div style="position:absolute;left:1398px;top:1391.5px;white-space:pre;font-size:29px;line-height:29px;color:#616161;font-weight:400"><span style="display:inline-block;transform:scaleX(0.9326);transform-origin:0 0;white-space:pre">{ EDU032 } EDU032 ESCOLA ENXANETA</span></div>
<div style="position:absolute;left:1998px;top:1384px;width:60px;height:48px;border-radius:24px;background:#e6f7ec"></div>
<div style="position:absolute;left:2007px;top:1390.9px;white-space:pre;font-size:32px;line-height:32px;color:#0c9b45;font-weight:400"><span style="display:inline-block;transform:scaleX(1.0042);transform-origin:0 0;white-space:pre">No</span></div>
<div style="position:absolute;left:2398px;top:1391.5px;white-space:pre;font-size:29px;line-height:29px;color:#616161;font-weight:400"><span style="display:inline-block;transform:scaleX(0.9863);transform-origin:0 0;white-space:pre">Inspección ocular de áreas de juegos - Mensual</span></div>
<div style="position:absolute;left:3198px;top:1391.5px;width:287px;overflow:hidden;font-size:29px;line-height:29px;color:#616161;font-weight:400"><span style="display:inline-block;transform:scaleX(0.9733);transform-origin:0 0;white-space:pre">Date Every 1 Months</span></div>
<div style="position:absolute;left:32px;top:1450px;width:3454px;height:2px;background:#e4e4e4"></div>
<svg style="position:absolute;left:66px;top:1482px" width="36" height="38" viewBox="0 0 36 38"><rect x="1.3" y="1.3" width="33.4" height="35.4" rx="8" fill="none" stroke="#5c5c5c" stroke-width="2.6"/></svg>
<div style="position:absolute;left:298px;top:1487.5px;white-space:pre;font-size:29px;line-height:29px;color:#616161;font-weight:400"><span style="display:inline-block;transform:scaleX(0.9291);transform-origin:0 0;white-space:pre">OT-2250FRA</span></div>
<div style="position:absolute;left:700px;top:1493px;width:16px;height:16px;border-radius:8px;background:#f0a045"></div>
<div style="position:absolute;left:734px;top:1487.5px;white-space:pre;font-size:29px;line-height:29px;color:#616161;font-weight:400"><span style="display:inline-block;transform:scaleX(0.9307);transform-origin:0 0;white-space:pre">Open WO&#x27;s</span></div>
<div style="position:absolute;left:1098px;top:1487.5px;white-space:pre;font-size:29px;line-height:29px;color:#616161;font-weight:400"><span style="display:inline-block;transform:scaleX(0.9337);transform-origin:0 0;white-space:pre">TROQ-0001</span></div>
<div style="position:absolute;left:1398px;top:1487.5px;white-space:pre;font-size:29px;line-height:29px;color:#616161;font-weight:400"><span style="display:inline-block;transform:scaleX(0.9312);transform-origin:0 0;white-space:pre">{ TROQ-0001 } TROQUEL 0001</span></div>
<div style="position:absolute;left:1998px;top:1480px;width:60px;height:48px;border-radius:24px;background:#e6f7ec"></div>
<div style="position:absolute;left:2007px;top:1486.9px;white-space:pre;font-size:32px;line-height:32px;color:#0c9b45;font-weight:400"><span style="display:inline-block;transform:scaleX(1.0042);transform-origin:0 0;white-space:pre">No</span></div>
<div style="position:absolute;left:2398px;top:1487.5px;white-space:pre;font-size:29px;line-height:29px;color:#616161;font-weight:400"><span style="display:inline-block;transform:scaleX(0.9287);transform-origin:0 0;white-space:pre">MANTENIMIENTO POR GOLPES</span></div>
<div style="position:absolute;left:3198px;top:1487.5px;width:287px;overflow:hidden;font-size:29px;line-height:29px;color:#616161;font-weight:400"><span style="display:inline-block;transform:scaleX(0.9428);transform-origin:0 0;white-space:pre">Reading Each 1000 GOLPES</span></div>
<div style="position:absolute;left:32px;top:1546px;width:3454px;height:2px;background:#e4e4e4"></div>
<svg style="position:absolute;left:66px;top:1578px" width="36" height="38" viewBox="0 0 36 38"><rect x="1.3" y="1.3" width="33.4" height="35.4" rx="8" fill="none" stroke="#5c5c5c" stroke-width="2.6"/></svg>
<div style="position:absolute;left:298px;top:1583.5px;white-space:pre;font-size:29px;line-height:29px;color:#616161;font-weight:400"><span style="display:inline-block;transform:scaleX(0.9291);transform-origin:0 0;white-space:pre">OT-2249FRA</span></div>
<div style="position:absolute;left:700px;top:1589px;width:16px;height:16px;border-radius:8px;background:#4a84ec"></div>
<div style="position:absolute;left:734px;top:1583.5px;white-space:pre;font-size:29px;line-height:29px;color:#616161;font-weight:400"><span style="display:inline-block;transform:scaleX(0.9653);transform-origin:0 0;white-space:pre">Complete WO&#x27;s</span></div>
<div style="position:absolute;left:1098px;top:1583.5px;white-space:pre;font-size:29px;line-height:29px;color:#616161;font-weight:400"><span style="display:inline-block;transform:scaleX(0.9687);transform-origin:0 0;white-space:pre">Aire-Lucas-1</span></div>
<div style="position:absolute;left:1398px;top:1583.5px;white-space:pre;font-size:29px;line-height:29px;color:#616161;font-weight:400"><span style="display:inline-block;transform:scaleX(0.9757);transform-origin:0 0;white-space:pre">{ Aire-Lucas-1 } Compresor</span></div>
<div style="position:absolute;left:1998px;top:1576px;width:60px;height:48px;border-radius:24px;background:#e6f7ec"></div>
<div style="position:absolute;left:2007px;top:1582.9px;white-space:pre;font-size:32px;line-height:32px;color:#0c9b45;font-weight:400"><span style="display:inline-block;transform:scaleX(1.0042);transform-origin:0 0;white-space:pre">No</span></div>
<div style="position:absolute;left:2398px;top:1583.5px;white-space:pre;font-size:29px;line-height:29px;color:#616161;font-weight:400"><span style="display:inline-block;transform:scaleX(0.9300);transform-origin:0 0;white-space:pre">MANTENIMIENTO POR HOROMETRO</span></div>
<div style="position:absolute;left:3198px;top:1583.5px;width:287px;overflow:hidden;font-size:29px;line-height:29px;color:#616161;font-weight:400"><span style="display:inline-block;transform:scaleX(0.9693);transform-origin:0 0;white-space:pre">Reading Each 250 Horas</span></div>
<div style="position:absolute;left:32px;top:1642px;width:3454px;height:2px;background:#e4e4e4"></div>
<svg style="position:absolute;left:66px;top:1674px" width="36" height="38" viewBox="0 0 36 38"><rect x="1.3" y="1.3" width="33.4" height="35.4" rx="8" fill="none" stroke="#5c5c5c" stroke-width="2.6"/></svg>
<div style="position:absolute;left:298px;top:1679.5px;white-space:pre;font-size:29px;line-height:29px;color:#616161;font-weight:400"><span style="display:inline-block;transform:scaleX(0.9291);transform-origin:0 0;white-space:pre">OT-2248FRA</span></div>
<div style="position:absolute;left:700px;top:1685px;width:16px;height:16px;border-radius:8px;background:#f0a045"></div>
<div style="position:absolute;left:734px;top:1679.5px;white-space:pre;font-size:29px;line-height:29px;color:#616161;font-weight:400"><span style="display:inline-block;transform:scaleX(0.9307);transform-origin:0 0;white-space:pre">Open WO&#x27;s</span></div>
<div style="position:absolute;left:1098px;top:1679.5px;white-space:pre;font-size:29px;line-height:29px;color:#616161;font-weight:400"><span style="display:inline-block;transform:scaleX(1.0050);transform-origin:0 0;white-space:pre">10008061</span></div>
<div style="position:absolute;left:1398px;top:1679.5px;white-space:pre;font-size:29px;line-height:29px;color:#616161;font-weight:400"><span style="display:inline-block;transform:scaleX(0.9417);transform-origin:0 0;white-space:pre">{ 10008061 } COMPRESOR</span></div>
<div style="position:absolute;left:1998px;top:1672px;width:60px;height:48px;border-radius:24px;background:#e6f7ec"></div>
<div style="position:absolute;left:2007px;top:1678.9px;white-space:pre;font-size:32px;line-height:32px;color:#0c9b45;font-weight:400"><span style="display:inline-block;transform:scaleX(1.0042);transform-origin:0 0;white-space:pre">No</span></div>
<div style="position:absolute;left:2398px;top:1679.5px;white-space:pre;font-size:29px;line-height:29px;color:#616161;font-weight:400"><span style="display:inline-block;transform:scaleX(0.9300);transform-origin:0 0;white-space:pre">MANTENIMIENTO POR HOROMETRO</span></div>
<div style="position:absolute;left:3198px;top:1679.5px;width:287px;overflow:hidden;font-size:29px;line-height:29px;color:#616161;font-weight:400"><span style="display:inline-block;transform:scaleX(0.9693);transform-origin:0 0;white-space:pre">Reading Each 250 Horas</span></div>
<div style="position:absolute;left:32px;top:1738px;width:3454px;height:2px;background:#e4e4e4"></div>
<svg style="position:absolute;left:66px;top:1770px" width="36" height="38" viewBox="0 0 36 38"><rect x="1.3" y="1.3" width="33.4" height="35.4" rx="8" fill="none" stroke="#5c5c5c" stroke-width="2.6"/></svg>
<div style="position:absolute;left:298px;top:1775.5px;white-space:pre;font-size:29px;line-height:29px;color:#616161;font-weight:400"><span style="display:inline-block;transform:scaleX(0.9291);transform-origin:0 0;white-space:pre">OT-2247FRA</span></div>
<div style="position:absolute;left:700px;top:1781px;width:16px;height:16px;border-radius:8px;background:#0e9a45"></div>
<div style="position:absolute;left:734px;top:1775.5px;white-space:pre;font-size:29px;line-height:29px;color:#616161;font-weight:400"><span style="display:inline-block;transform:scaleX(0.9823);transform-origin:0 0;white-space:pre">Closed</span></div>
<div style="position:absolute;left:1098px;top:1775.5px;white-space:pre;font-size:29px;line-height:29px;color:#616161;font-weight:400"><span style="display:inline-block;transform:scaleX(0.9289);transform-origin:0 0;white-space:pre">TROQU-0002</span></div>
<div style="position:absolute;left:1398px;top:1775.5px;white-space:pre;font-size:29px;line-height:29px;color:#616161;font-weight:400"><span style="display:inline-block;transform:scaleX(0.9293);transform-origin:0 0;white-space:pre">{ TROQU-0002 } TROQUEL 0002</span></div>
<div style="position:absolute;left:1998px;top:1768px;width:60px;height:48px;border-radius:24px;background:#e6f7ec"></div>
<div style="position:absolute;left:2007px;top:1774.9px;white-space:pre;font-size:32px;line-height:32px;color:#0c9b45;font-weight:400"><span style="display:inline-block;transform:scaleX(1.0042);transform-origin:0 0;white-space:pre">No</span></div>
<div style="position:absolute;left:2398px;top:1775.5px;white-space:pre;font-size:29px;line-height:29px;color:#616161;font-weight:400"><span style="display:inline-block;transform:scaleX(0.9287);transform-origin:0 0;white-space:pre">MANTENIMIENTO POR GOLPES</span></div>
<div style="position:absolute;left:3198px;top:1775.5px;width:287px;overflow:hidden;font-size:29px;line-height:29px;color:#616161;font-weight:400"><span style="display:inline-block;transform:scaleX(0.9748);transform-origin:0 0;white-space:pre">Manual Reading Each 1000</span></div>
<div style="position:absolute;left:32px;top:1834px;width:3454px;height:2px;background:#e4e4e4"></div>
<svg style="position:absolute;left:66px;top:1866px" width="36" height="38" viewBox="0 0 36 38"><rect x="1.3" y="1.3" width="33.4" height="35.4" rx="8" fill="none" stroke="#5c5c5c" stroke-width="2.6"/></svg>
<div style="position:absolute;left:298px;top:1871.5px;white-space:pre;font-size:29px;line-height:29px;color:#616161;font-weight:400"><span style="display:inline-block;transform:scaleX(0.9291);transform-origin:0 0;white-space:pre">OT-2239FRA</span></div>
<div style="position:absolute;left:700px;top:1877px;width:16px;height:16px;border-radius:8px;background:#0e9a45"></div>
<div style="position:absolute;left:734px;top:1871.5px;white-space:pre;font-size:29px;line-height:29px;color:#616161;font-weight:400"><span style="display:inline-block;transform:scaleX(0.9823);transform-origin:0 0;white-space:pre">Closed</span></div>
<div style="position:absolute;left:1098px;top:1871.5px;white-space:pre;font-size:29px;line-height:29px;color:#616161;font-weight:400"><span style="display:inline-block;transform:scaleX(1.0050);transform-origin:0 0;white-space:pre">10000905</span></div>
<div style="position:absolute;left:1398px;top:1871.5px;white-space:pre;font-size:29px;line-height:29px;color:#616161;font-weight:400"><span style="display:inline-block;transform:scaleX(0.9288);transform-origin:0 0;white-space:pre">1989 PERFORADORA NEUMATICA MEUDON</span></div>
<div style="position:absolute;left:1998px;top:1864px;width:60px;height:48px;border-radius:24px;background:#e6f7ec"></div>
<div style="position:absolute;left:2007px;top:1870.9px;white-space:pre;font-size:32px;line-height:32px;color:#0c9b45;font-weight:400"><span style="display:inline-block;transform:scaleX(1.0042);transform-origin:0 0;white-space:pre">No</span></div>
<div style="position:absolute;left:2398px;top:1871.5px;white-space:pre;font-size:29px;line-height:29px;color:#616161;font-weight:400"><span style="display:inline-block;transform:scaleX(0.9585);transform-origin:0 0;white-space:pre">MANTENIMIENTO</span></div>
<div style="position:absolute;left:3198px;top:1871.5px;width:287px;overflow:hidden;font-size:29px;line-height:29px;color:#616161;font-weight:400"><span style="display:inline-block;transform:scaleX(0.9734);transform-origin:0 0;white-space:pre">Manual Reading Each 400</span></div>
<div style="position:absolute;left:32px;top:1930px;width:3454px;height:2px;background:#e4e4e4"></div>
<svg style="position:absolute;left:66px;top:1962px" width="36" height="38" viewBox="0 0 36 38"><rect x="1.3" y="1.3" width="33.4" height="35.4" rx="8" fill="none" stroke="#5c5c5c" stroke-width="2.6"/></svg>
<div style="position:absolute;left:298px;top:1967.5px;white-space:pre;font-size:29px;line-height:29px;color:#616161;font-weight:400"><span style="display:inline-block;transform:scaleX(0.9291);transform-origin:0 0;white-space:pre">OT-2238FRA</span></div>
<div style="position:absolute;left:700px;top:1973px;width:16px;height:16px;border-radius:8px;background:#0e9a45"></div>
<div style="position:absolute;left:734px;top:1967.5px;white-space:pre;font-size:29px;line-height:29px;color:#616161;font-weight:400"><span style="display:inline-block;transform:scaleX(0.9823);transform-origin:0 0;white-space:pre">Closed</span></div>
<div style="position:absolute;left:1098px;top:1967.5px;white-space:pre;font-size:29px;line-height:29px;color:#616161;font-weight:400"><span style="display:inline-block;transform:scaleX(1.0050);transform-origin:0 0;white-space:pre">10000905</span></div>
<div style="position:absolute;left:1398px;top:1967.5px;white-space:pre;font-size:29px;line-height:29px;color:#616161;font-weight:400"><span style="display:inline-block;transform:scaleX(0.9288);transform-origin:0 0;white-space:pre">1989 PERFORADORA NEUMATICA MEUDON</span></div>
<div style="position:absolute;left:1998px;top:1960px;width:60px;height:48px;border-radius:24px;background:#e6f7ec"></div>
<div style="position:absolute;left:2007px;top:1966.9px;white-space:pre;font-size:32px;line-height:32px;color:#0c9b45;font-weight:400"><span style="display:inline-block;transform:scaleX(1.0042);transform-origin:0 0;white-space:pre">No</span></div>
<div style="position:absolute;left:2398px;top:1967.5px;white-space:pre;font-size:29px;line-height:29px;color:#616161;font-weight:400"><span style="display:inline-block;transform:scaleX(0.9585);transform-origin:0 0;white-space:pre">MANTENIMIENTO</span></div>
<div style="position:absolute;left:3198px;top:1967.5px;width:287px;overflow:hidden;font-size:29px;line-height:29px;color:#616161;font-weight:400"><span style="display:inline-block;transform:scaleX(0.9693);transform-origin:0 0;white-space:pre">Reading Each 400 Horas</span></div>
<div style="position:absolute;left:32px;top:2034px;width:3454px;height:2px;background:#e4e4e4"></div>
<div style="position:absolute;left:54px;top:2063px;width:262px;height:68px;border:4px solid #ff0000;border-radius:2px"></div>
<div style="position:absolute;left:80px;top:2082.5px;white-space:pre;font-size:29px;line-height:29px;color:#9e9e9e;font-weight:400"><span style="display:inline-block;transform:scaleX(0.9952);transform-origin:0 0;white-space:pre">Showing 40 of 40</span></div>
</body></html>
